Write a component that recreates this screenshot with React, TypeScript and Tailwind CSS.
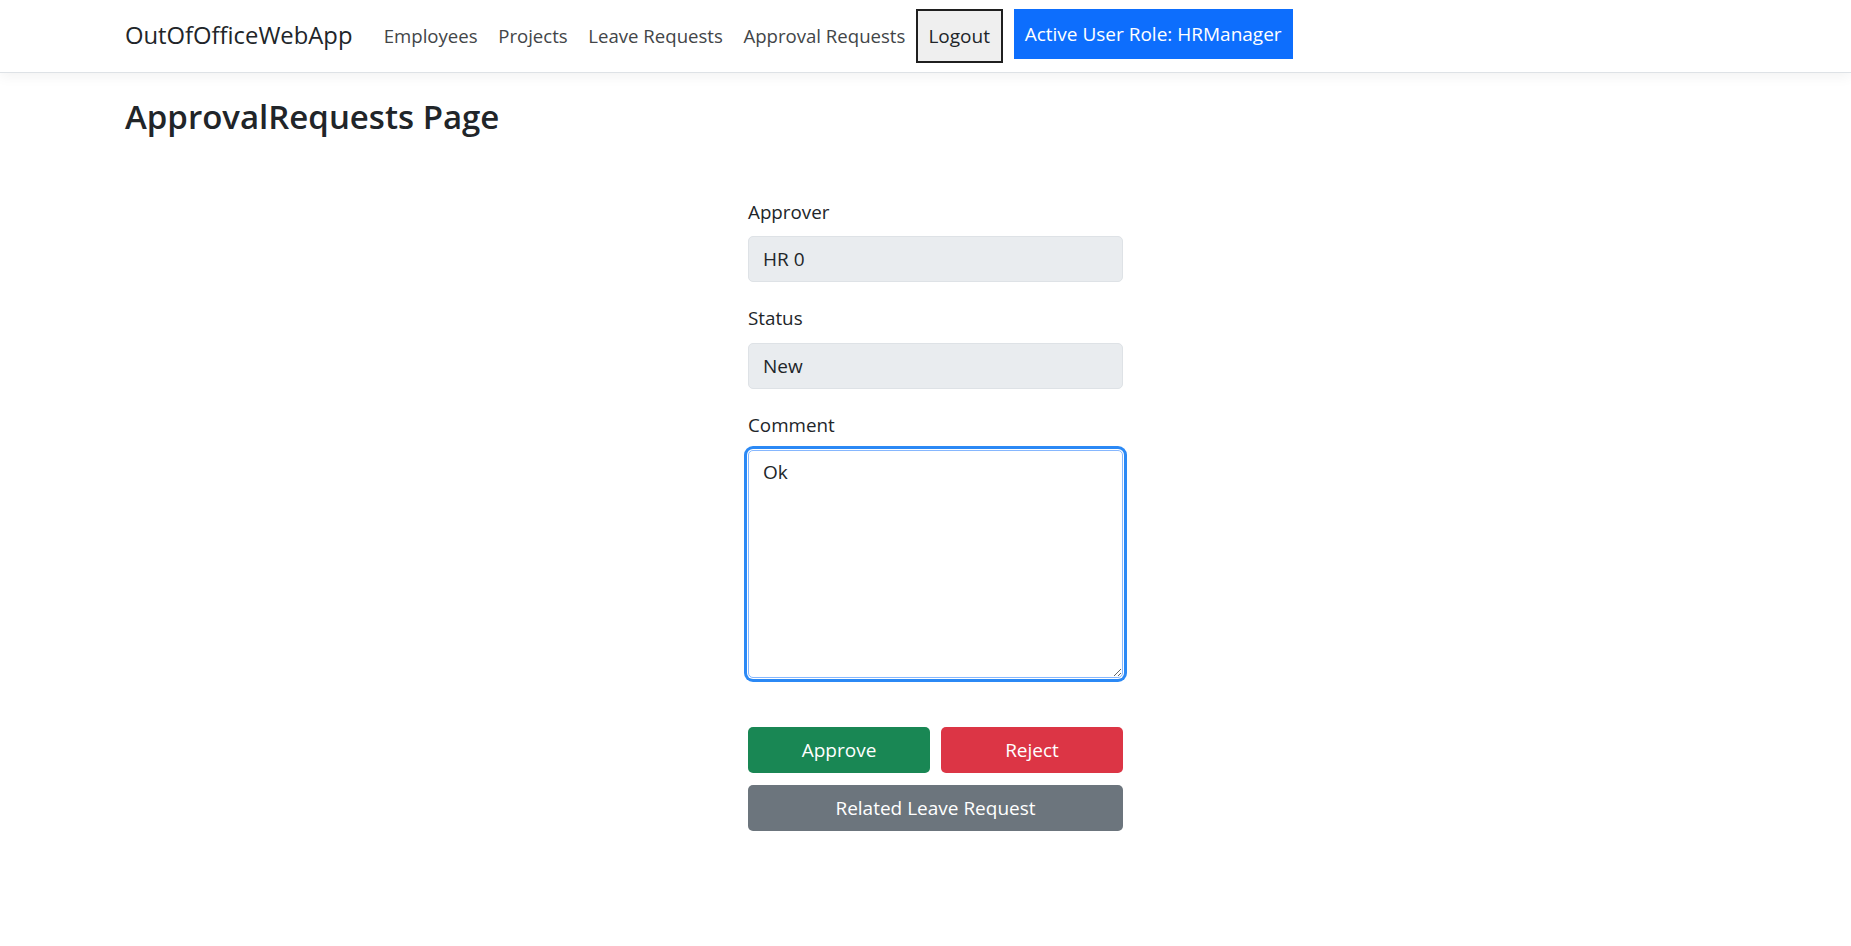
import React from "react";

const navLinks = ["Employees", "Projects", "Leave Requests", "Approval Requests"];

function NavBar() {
  return (
    <nav className="flex h-[73px] items-start border-b border-[#dee2e6] bg-white pl-[125px] shadow-[0_4px_12px_rgba(0,0,0,0.05)]">
      <a className="mr-[21px] self-center text-[23.8px] leading-none text-[#212529]">OutOfOfficeWebApp</a>
      {navLinks.map((link) => (
        <a key={link} className="px-[10.3px] self-center text-[18.6px] leading-none text-[#424548]">
          {link}
        </a>
      ))}
      <button className="mt-[9px] h-[54px] w-[87px] border-2 border-[#1f1f1f] bg-[#efefef] text-[19px] text-[#212529]">
        Logout
      </button>
      <div className="ml-[11px] mt-[9px] flex h-[50px] items-center bg-[#0d6efd] px-[11px] text-[19px] text-white">
        Active User Role: HRManager
      </div>
    </nav>
  );
}

type FieldProps = {
  label: string;
  value: string;
};

function ReadOnlyField({ label, value }: FieldProps) {
  return (
    <div className="mb-[22px]">
      <label className="mb-[10px] block text-[18.8px] leading-[28.8px] text-[#212529]">{label}</label>
      <div className="flex h-[46px] items-center rounded-[5px] border border-[#dee2e6] bg-[#e9ecef] px-[14px] text-[19px] text-[#212529]">
        {value}
      </div>
    </div>
  );
}

export default function App() {
  return (
    <div className="min-h-screen bg-white font-['Open_Sans',sans-serif] text-[#212529]">
      <NavBar />
      <main>
        <h2 className="ml-[125px] mt-[24px] text-[33px] font-semibold leading-[1.2] text-[#212529]">
          ApprovalRequests Page
        </h2>
        <div className="ml-[748px] mt-[61px] w-[375px]">
          <ReadOnlyField label="Approver" value="HR 0" />
          <ReadOnlyField label="Status" value="New" />
          <div>
            <label className="mb-[10px] block text-[18.8px] leading-[28.8px] text-[#212529]">Comment</label>
            <textarea
              readOnly
              value="Ok"
              className="block h-[228px] w-full rounded-[5px] border border-[#86b7fe] bg-white px-[14px] py-[7px] text-[19px] leading-[28.8px] text-[#212529] shadow-[0_0_0_1px_#ffffff,0_0_0_4px_#2b89f5] outline-none"
            />
          </div>
          <div className="mt-[49px] grid grid-cols-2 gap-[11px]">
            <button className="h-[46px] rounded-[5px] bg-[#198754] text-[19px] text-white">Approve</button>
            <button className="h-[46px] rounded-[5px] bg-[#dc3545] text-[19px] text-white">Reject</button>
          </div>
          <button className="mt-[12px] h-[46px] w-full rounded-[5px] bg-[#6c757d] text-[19px] text-white">
            Related Leave Request
          </button>
        </div>
      </main>
    </div>
  );
}
